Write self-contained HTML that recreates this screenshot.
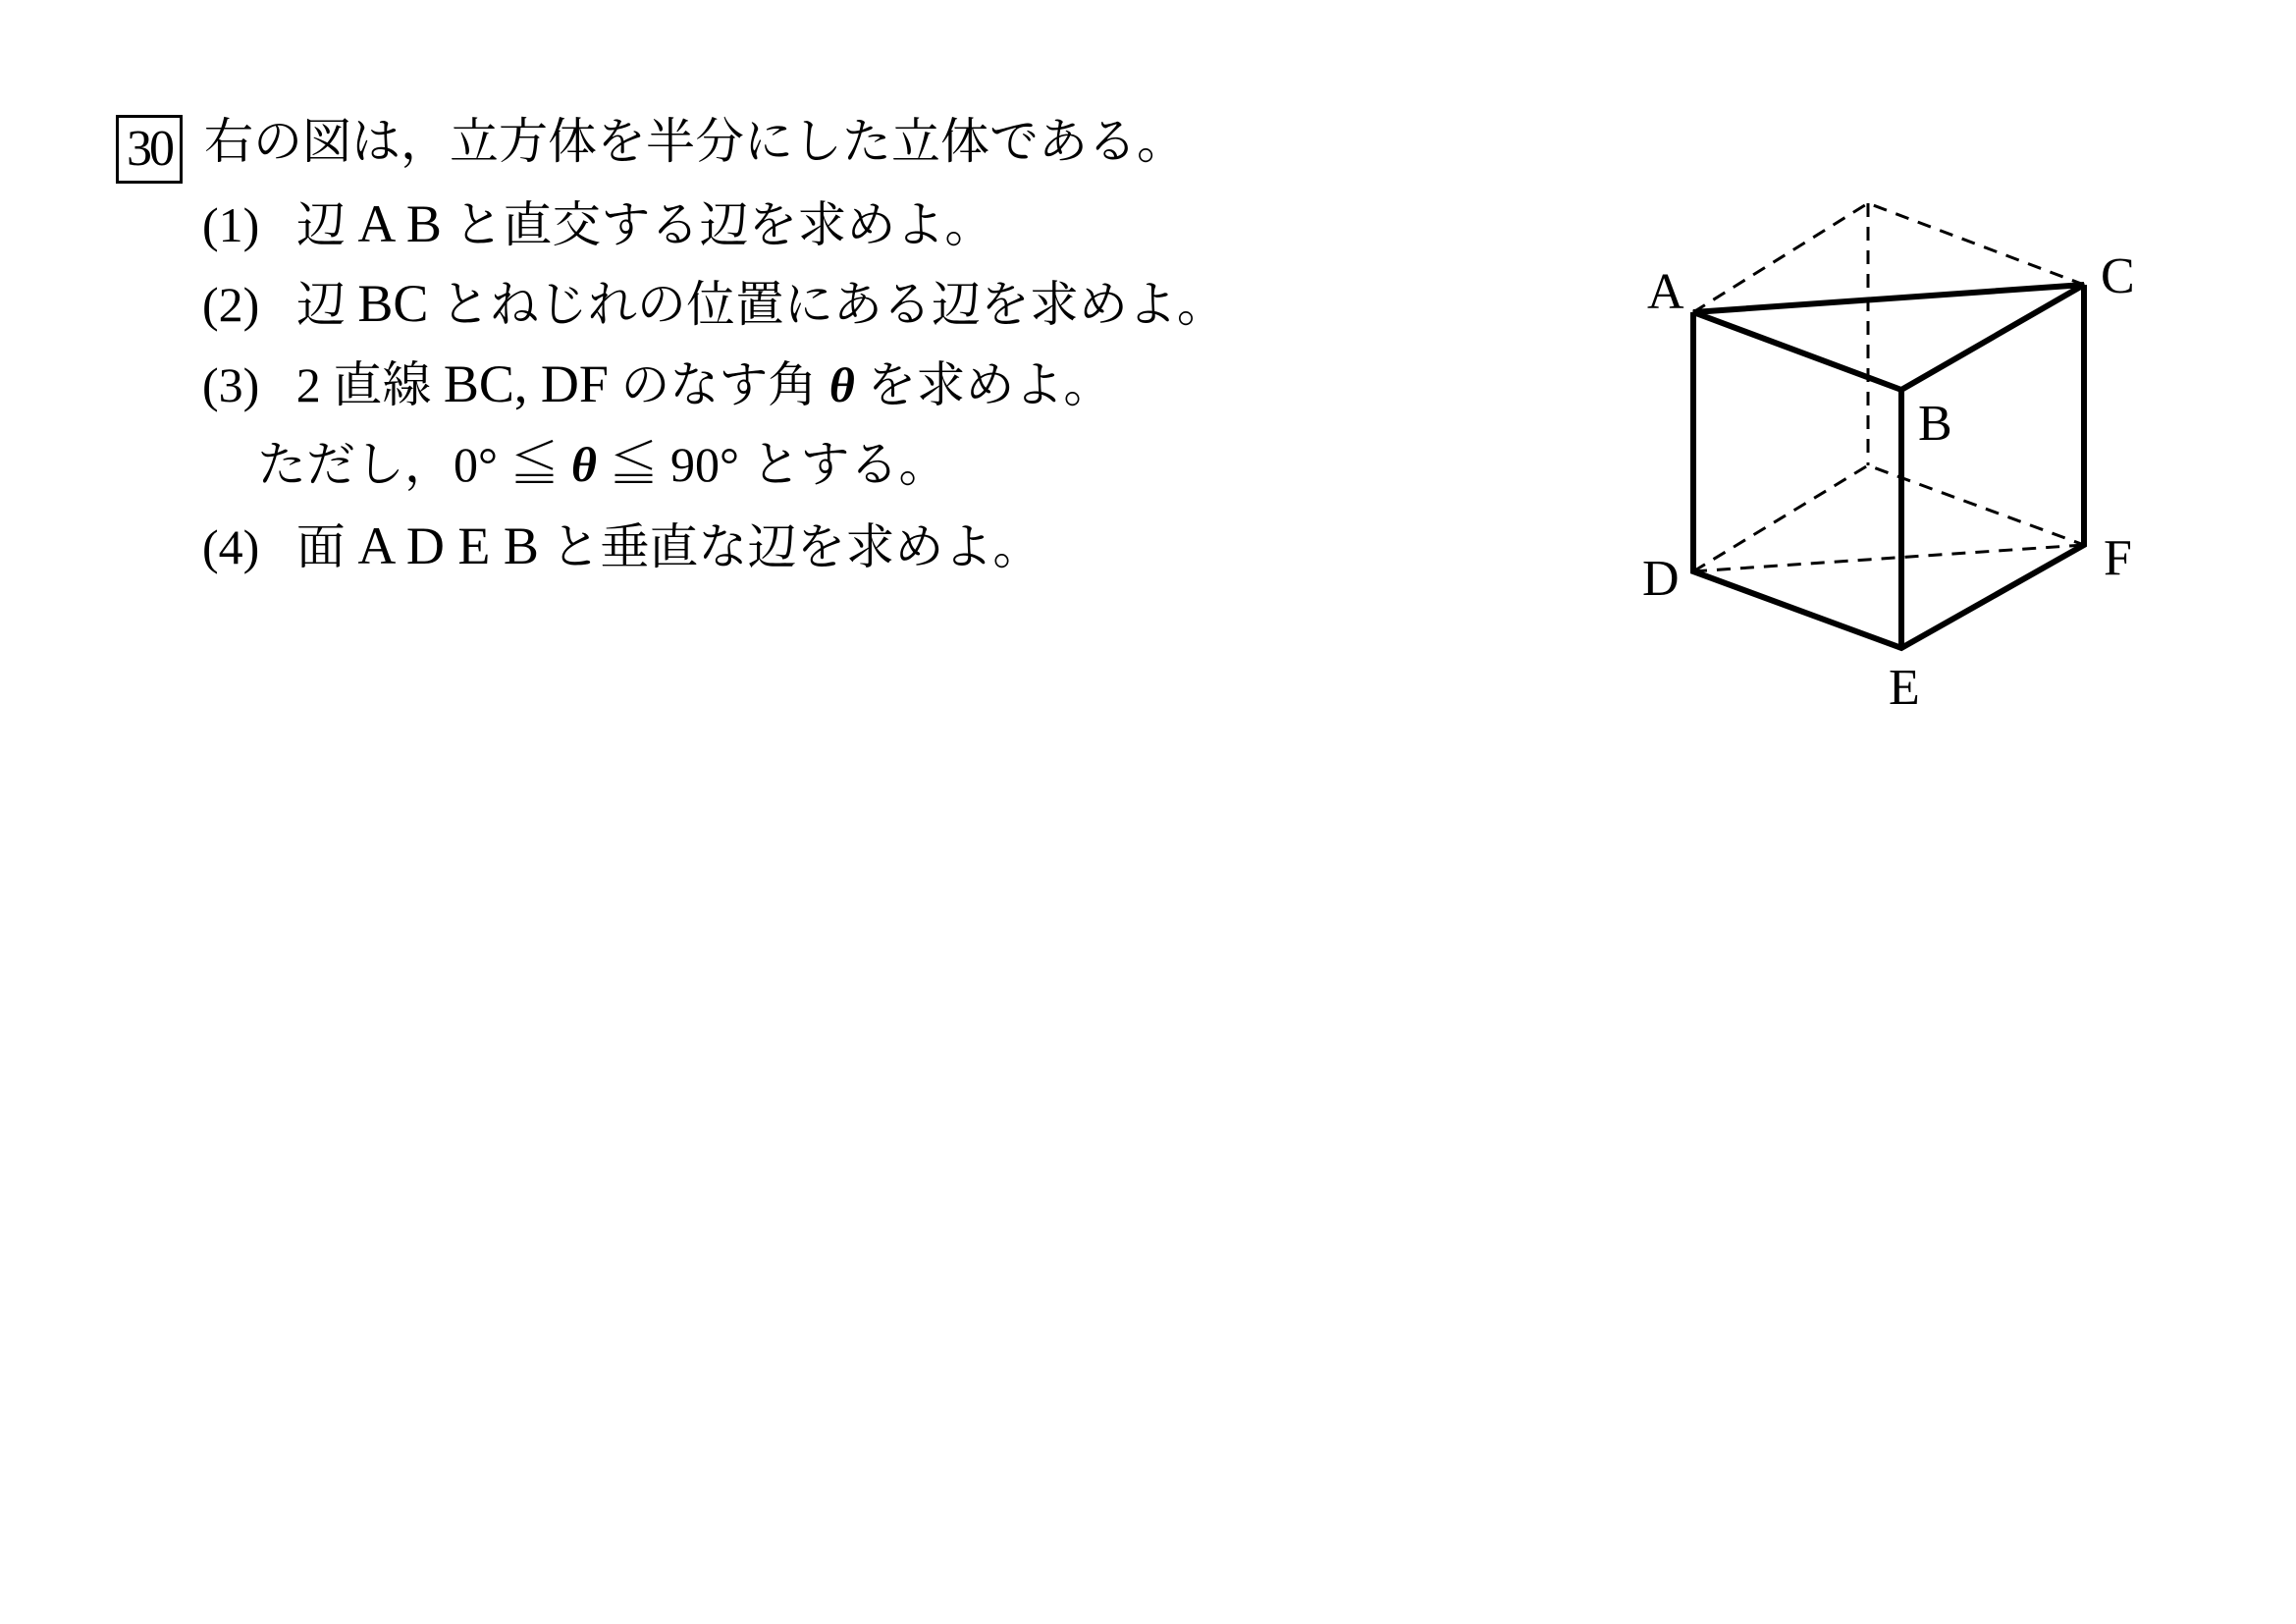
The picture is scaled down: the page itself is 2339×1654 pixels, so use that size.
<!DOCTYPE html>
<html><head><meta charset="utf-8"><style>
body{margin:0;background:#fff;width:2339px;height:1654px;position:relative;overflow:hidden}
.t{position:absolute;font-family:"Liberation Serif","Noto Serif CJK JP",serif;font-size:50px;line-height:50px;color:#000;white-space:nowrap}
.t span{font-size:54px}
.box{position:absolute;left:118px;top:117px;width:62px;height:64px;border:3px solid #000;font-family:"Liberation Serif",serif;font-size:52px;line-height:64px;text-align:center;letter-spacing:-3px}
.l{position:absolute;font-family:"Liberation Serif",serif;font-size:52px;line-height:52px}
</style></head><body>
<div class="box">30</div>
<div class="t" style="left:208px;top:119px">右の図は，立方体を半分にした立体である。</div>
<div class="t" style="left:206px;top:203px">(1)&nbsp;&nbsp;&nbsp;辺 <span>A B</span> と直交する辺を求めよ。</div>
<div class="t" style="left:206px;top:284px">(2)&nbsp;&nbsp;&nbsp;辺 <span>BC</span> とねじれの位置にある辺を求めよ。</div>
<div class="t" style="left:206px;top:366px">(3)&nbsp;&nbsp;&nbsp;2 直線 <span>BC,&nbsp;DF</span> のなす角 <i><b>θ</b></i> を求めよ。</div>
<div class="t" style="left:262px;top:448px">ただし，0° ≦ <i><b>θ</b></i> ≦ 90° とする。</div>
<div class="t" style="left:206px;top:531px">(4)&nbsp;&nbsp;&nbsp;面 <span>A D E B</span> と垂直な辺を求めよ。</div>
<svg width="2339" height="1654" style="position:absolute;left:-7px;top:0">
<g stroke="#000" stroke-width="3" stroke-dasharray="14,10" fill="none">
<path d="M1732 318 L1910 207 L2130 290"/>
<path d="M1910 207 L1910 474"/>
<path d="M1732 582 L1910 474 L2130 555"/>
<path d="M1732 582 L2130 555"/>
</g>
<g stroke="#000" stroke-width="6" fill="none" stroke-linejoin="miter">
<path d="M1732 318 L2130 290 L1944 397 Z"/>
<path d="M1732 318 L1732 582 L1944 660 L2130 555 L2130 290"/>
<path d="M1944 397 L1944 660"/>
</g>
</svg>
<div class="l" style="left:1678px;top:272px">A</div>
<div class="l" style="left:2140px;top:256px">C</div>
<div class="l" style="left:1954px;top:406px">B</div>
<div class="l" style="left:1673px;top:564px">D</div>
<div class="l" style="left:2143px;top:543px">F</div>
<div class="l" style="left:1924px;top:675px">E</div>
</body></html>
